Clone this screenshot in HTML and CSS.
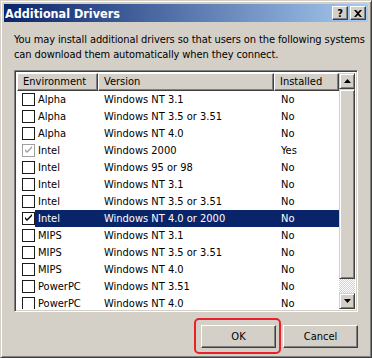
FILE: index.html
```html
<!DOCTYPE html>
<html>
  <head>
    <meta charset="UTF-8" />
    <title>Additional Drivers</title>
    <link rel="stylesheet" href="styles.css">
  </head>
  <body>
    <div class="window">
      <div class="titlebar">
        <span class="title">Additional Drivers</span>
        <div class="tbtns">
          <span class="tbtn">?</span>
          <span class="tbtn close">
            <svg width="8" height="7" viewBox="0 0 8 7"><path d="M0 0h2l2 2 2-2h2L5 3.5 8 7H6L4 5 2 7H0l3-3.5z" fill="#000"/></svg>
          </span>
        </div>
      </div>
      <div class="body">
        <p class="intro">You may install additional drivers so that users on the following systems<br>can download them automatically when they connect.</p>
        <div class="listbox">
          <div class="listarea">
            <div class="head">
              <div class="hcell c-env">Environment</div>
              <div class="hcell c-ver">Version</div>
              <div class="hcell c-inst">Installed</div>
            </div>
            <div class="rows">
              <div class="row"><span class="c-env"><i class="cb"></i>Alpha</span><span class="c-ver">Windows NT 3.1</span><span class="c-inst">No</span></div>
              <div class="row"><span class="c-env"><i class="cb"></i>Alpha</span><span class="c-ver">Windows NT 3.5 or 3.51</span><span class="c-inst">No</span></div>
              <div class="row"><span class="c-env"><i class="cb"></i>Alpha</span><span class="c-ver">Windows NT 4.0</span><span class="c-inst">No</span></div>
              <div class="row"><span class="c-env"><i class="cb dis"><svg width="9" height="9" viewBox="0 0 9 9"><path d="M1 3l2 2 5-5v2l-5 5-2-2z" fill="#a0a0a0"/></svg></i>Intel</span><span class="c-ver">Windows 2000</span><span class="c-inst">Yes</span></div>
              <div class="row"><span class="c-env"><i class="cb"></i>Intel</span><span class="c-ver">Windows 95 or 98</span><span class="c-inst">No</span></div>
              <div class="row"><span class="c-env"><i class="cb"></i>Intel</span><span class="c-ver">Windows NT 3.1</span><span class="c-inst">No</span></div>
              <div class="row"><span class="c-env"><i class="cb"></i>Intel</span><span class="c-ver">Windows NT 3.5 or 3.51</span><span class="c-inst">No</span></div>
              <div class="row sel"><span class="c-env"><i class="cb"><svg width="9" height="9" viewBox="0 0 9 9"><path d="M1 3l2 2 5-5v2l-5 5-2-2z" fill="#000"/></svg></i>Intel</span><span class="c-ver">Windows NT 4.0 or 2000</span><span class="c-inst">No</span></div>
              <div class="row"><span class="c-env"><i class="cb"></i>MIPS</span><span class="c-ver">Windows NT 3.1</span><span class="c-inst">No</span></div>
              <div class="row"><span class="c-env"><i class="cb"></i>MIPS</span><span class="c-ver">Windows NT 3.5 or 3.51</span><span class="c-inst">No</span></div>
              <div class="row"><span class="c-env"><i class="cb"></i>MIPS</span><span class="c-ver">Windows NT 4.0</span><span class="c-inst">No</span></div>
              <div class="row"><span class="c-env"><i class="cb"></i>PowerPC</span><span class="c-ver">Windows NT 3.51</span><span class="c-inst">No</span></div>
              <div class="row"><span class="c-env"><i class="cb"></i>PowerPC</span><span class="c-ver">Windows NT 4.0</span><span class="c-inst">No</span></div>
            </div>
          </div>
          <div class="scrollbar">
            <div class="sbtn"><svg width="7" height="4" viewBox="0 0 7 4"><path d="M3.5 0L7 4H0z" fill="#000"/></svg></div>
            <div class="thumb"></div>
            <div class="track"></div>
            <div class="sbtn"><svg width="7" height="4" viewBox="0 0 7 4"><path d="M0 0h7L3.5 4z" fill="#000"/></svg></div>
          </div>
        </div>
        <div class="actions">
          <div class="focusring"><button class="btn">OK</button></div>
          <button class="btn">Cancel</button>
        </div>
      </div>
    </div>
  </body>
</html>
```

FILE: styles.css
```css
* {
  --face: #d4d0c8;
  --shadow: #808080;
  --dark: #404040;
  --hilite: #fff;
  --navy: #0a246a;
  box-sizing: border-box;
}
body {
  margin: 0;
  font-family: "DejaVu Sans Condensed", "DejaVu Sans", sans-serif;
  font-size: 11px;
  background: var(--face);
}
.window {
  width: 372px;
  height: 358px;
  background: var(--face);
  border: 1px solid;
  border-color: var(--face) var(--dark) var(--dark) var(--face);
  box-shadow: inset 1px 1px 0 var(--hilite), inset -1px -1px 0 var(--shadow);
  padding: 3px;
  display: flex;
  flex-direction: column;
}
.titlebar {
  height: 18px;
  background: linear-gradient(to right, #0a246a, #a6caf0);
  display: flex;
  align-items: center;
  justify-content: space-between;
  padding: 0 2px 0 1px;
}
.title {
  color: #fff;
  font-weight: bold;
  font-size: 12.5px;
}
.tbtns {
  display: flex;
  gap: 2px;
}
.tbtn {
  width: 16px;
  height: 14px;
  background: var(--face);
  border: 1px solid;
  border-color: var(--hilite) var(--dark) var(--dark) var(--hilite);
  box-shadow: inset -1px -1px 0 var(--shadow);
  display: flex;
  align-items: center;
  justify-content: center;
  font-weight: bold;
  font-size: 11px;
  line-height: 1;
  color: #000;
}
.body {
  flex: 1;
  padding: 0 10px 0 10px;
  display: flex;
  flex-direction: column;
}
.intro {
  margin: 10px -10px 8px 0;
  line-height: 15px;
  color: #000;
  white-space: nowrap;
  letter-spacing: -0.1px;
}
.listbox {
  height: 242px;
  border: 1px solid;
  border-color: var(--shadow) var(--hilite) var(--hilite) var(--shadow);
  box-shadow: inset 1px 1px 0 var(--dark), inset -1px -1px 0 var(--face);
  padding: 2px;
  display: flex;
  background: #fff;
}
.listarea {
  flex: 1;
  overflow: hidden;
}
.head {
  display: flex;
  height: 18px;
}
.hcell {
  background: var(--face);
  border: 1px solid;
  border-color: var(--hilite) var(--dark) var(--dark) var(--hilite);
  box-shadow: inset -1px -1px 0 var(--shadow);
  padding: 2px 0 0 5px;
  line-height: 12px;
}
.c-env { width: 81px; }
.c-ver { width: 176px; }
.c-inst { width: 65px; }
.row {
  display: flex;
  height: 17px;
  align-items: center;
}
.row span {
  display: flex;
  align-items: center;
  height: 17px;
  white-space: nowrap;
}
.row .c-env { padding-left: 5px; }
.row .c-ver { padding-left: 6px; }
.row .c-inst { padding-left: 7px; }
.cb {
  width: 13px;
  height: 13px;
  border: 1px solid #1c1c1c;
  background: #fff;
  margin-right: 3px;
  display: flex;
  align-items: center;
  justify-content: center;
}
.cb.dis { border-color: #a0a0a0; }
.row.sel {
  background: linear-gradient(to right, transparent 18px, var(--navy) 18px);
  color: #fff;
}
.scrollbar {
  width: 16px;
  display: flex;
  flex-direction: column;
}
.sbtn, .thumb {
  background: var(--face);
  border: 1px solid;
  border-color: var(--face) var(--dark) var(--dark) var(--face);
  box-shadow: inset 1px 1px 0 var(--hilite), inset -1px -1px 0 var(--shadow);
}
.sbtn {
  height: 16px;
  display: flex;
  align-items: center;
  justify-content: center;
}
.thumb {
  height: 190px;
}
.track {
  flex: 1;
  background-color: #fff;
  background-image: repeating-conic-gradient(var(--face) 0 25%, #fff 0 50%);
  background-size: 2px 2px;
}
.actions {
  display: flex;
  justify-content: flex-end;
  align-items: center;
  gap: 2px;
  margin-top: 6px;
}
.focusring {
  border: 2px solid #e8202a;
  border-radius: 5px;
  padding: 5px 3px 4px 5px;
}
.btn {
  width: 75px;
  height: 23px;
  font: inherit;
  color: #000;
  background: var(--face);
  border: 1px solid;
  border-color: var(--hilite) var(--dark) var(--dark) var(--hilite);
  box-shadow: inset -1px -1px 0 var(--shadow);
  padding: 0;
}
```
